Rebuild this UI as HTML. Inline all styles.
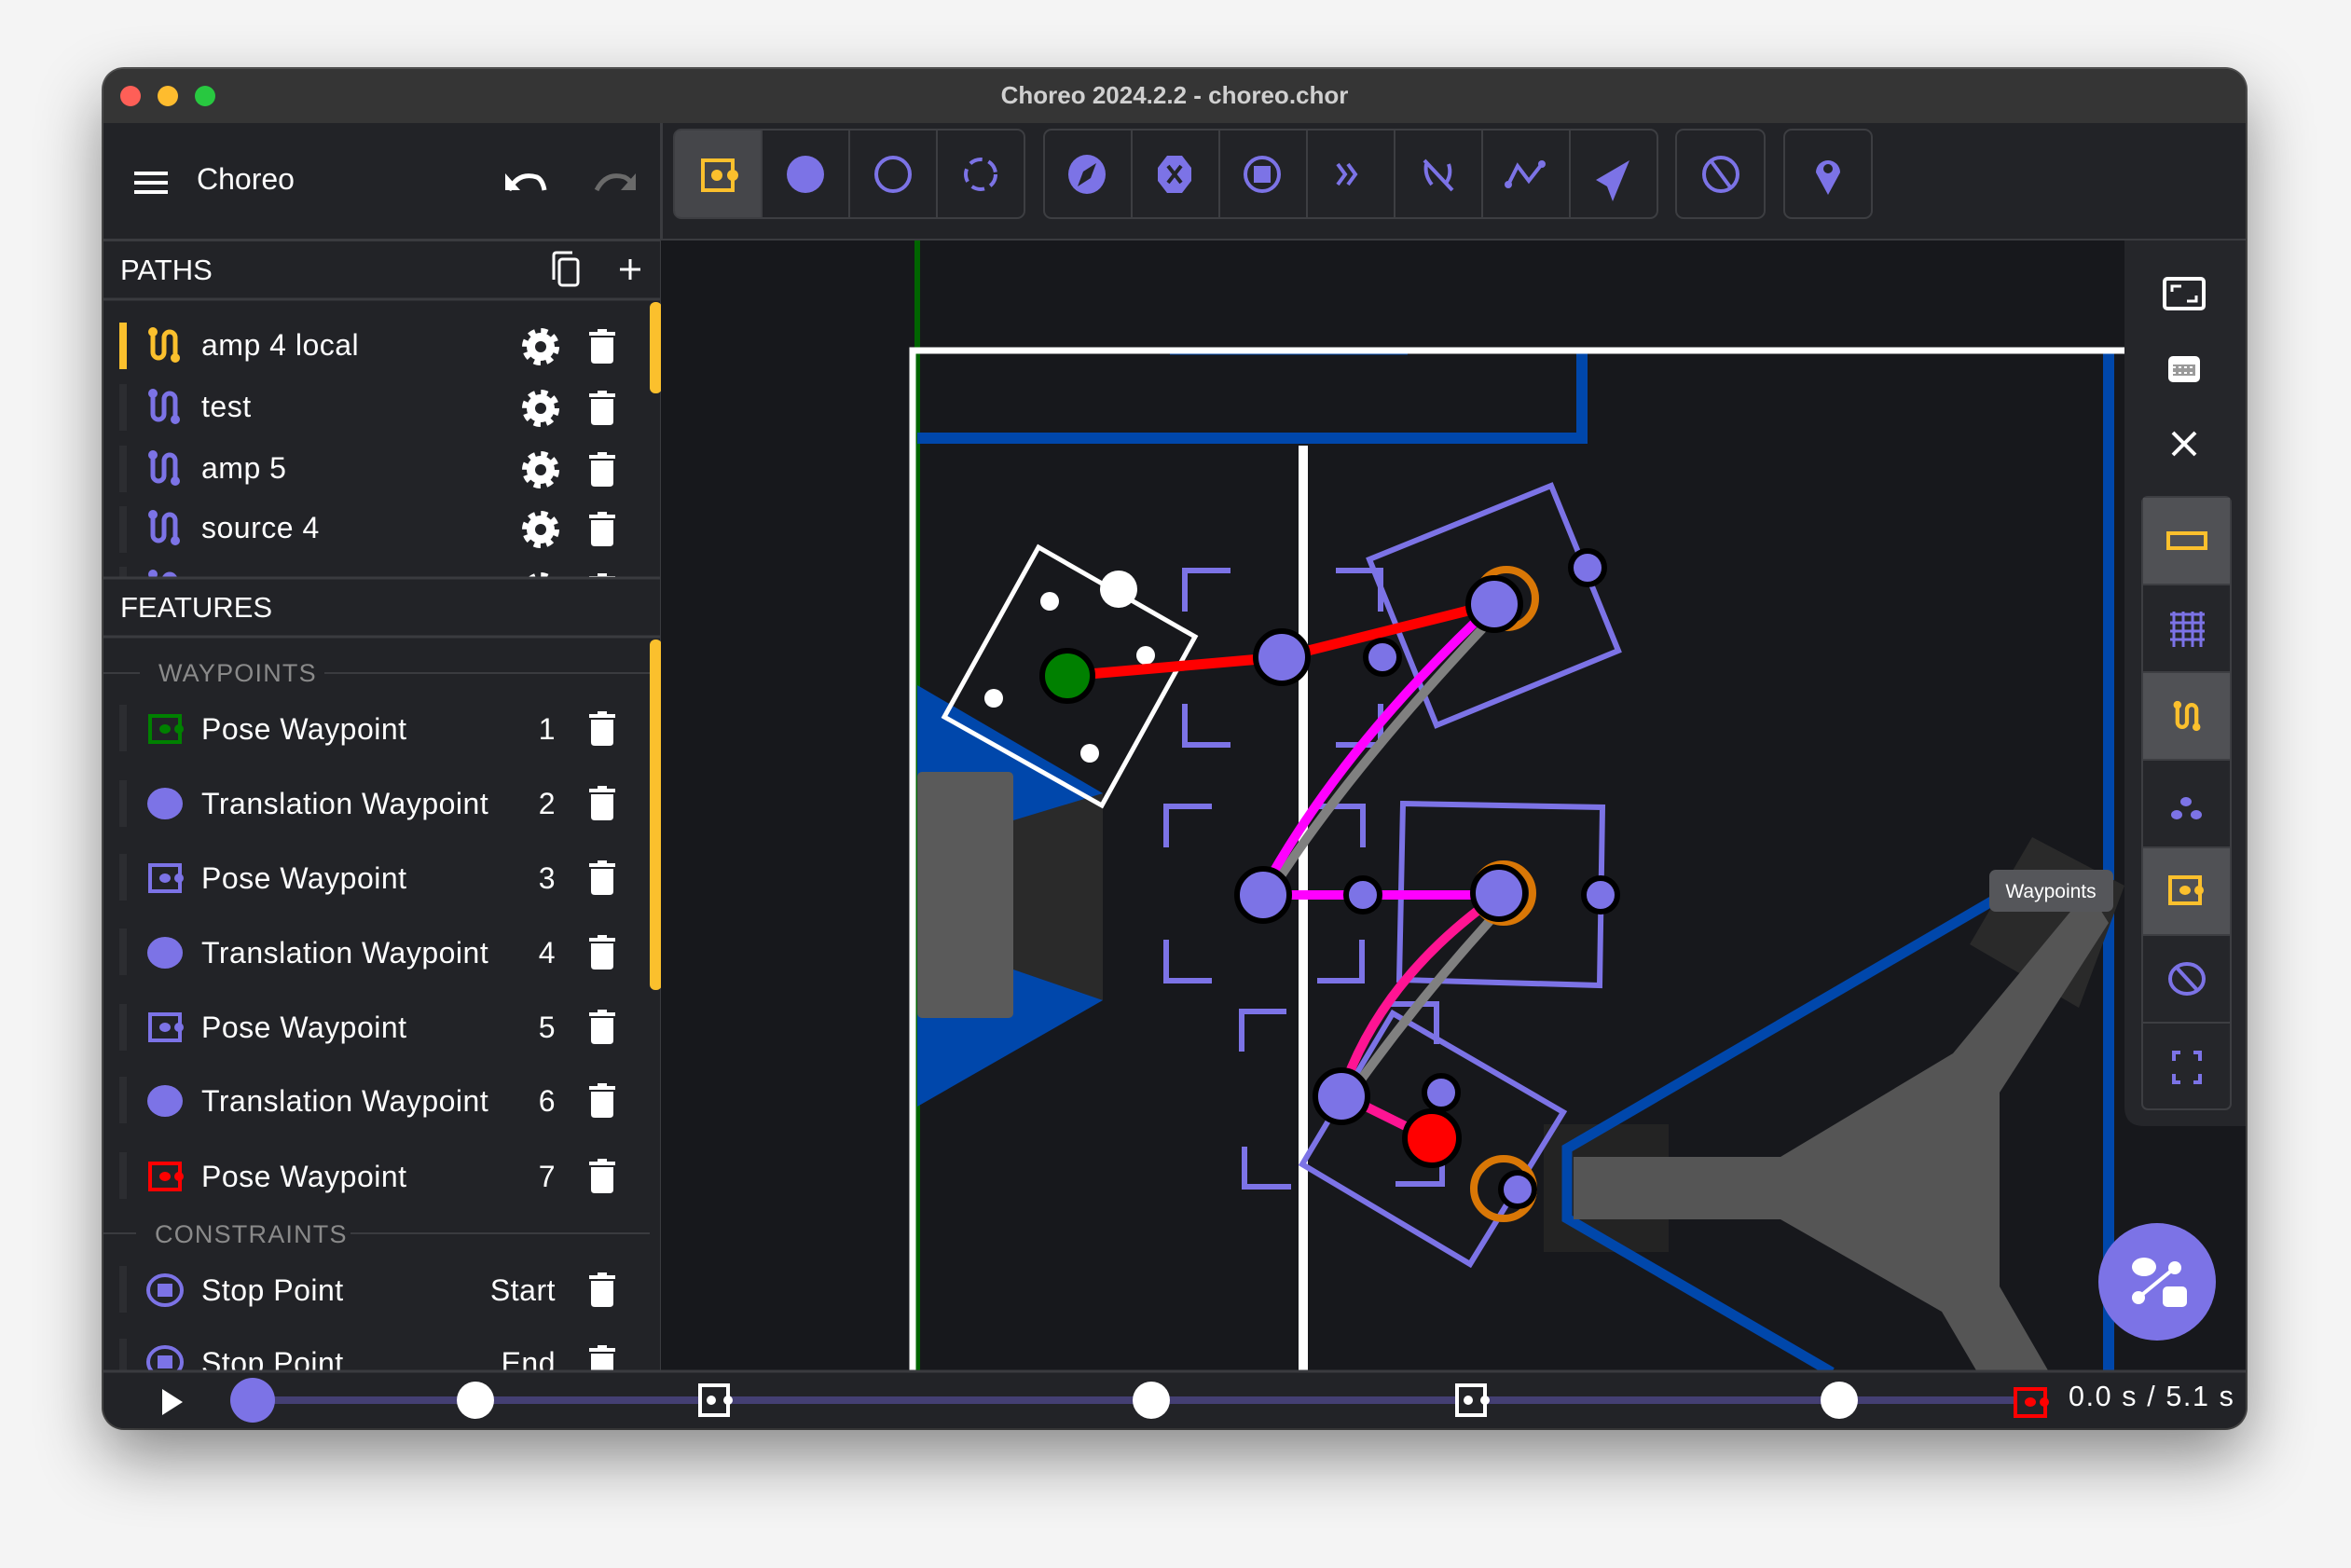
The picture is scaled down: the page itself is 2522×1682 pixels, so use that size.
<!DOCTYPE html>
<html><head><meta charset="utf-8"><style>
html,body{margin:0;padding:0;width:2522px;height:1682px;overflow:hidden;background:#f4f4f4;}
#win{position:absolute;left:111px;top:74px;width:2298px;height:1458px;border-radius:22px;box-shadow:0 30px 70px rgba(0,0,0,0.45),0 0 0 2px #555;overflow:hidden;background:#17181c;}
svg{position:absolute;left:0;top:0;}
text{font-family:"Liberation Sans",sans-serif;}
</style></head><body>
<div id="win"></div>
<svg width="2522" height="1682" viewBox="0 0 2522 1682">
<defs>
<clipPath id="wc"><rect x="111" y="74" width="2298" height="1458" rx="22"/></clipPath>
<clipPath id="cv"><rect x="709" y="258" width="1570" height="1212"/></clipPath>
<clipPath id="sl1"><rect x="111" y="322" width="598" height="298"/></clipPath>
<clipPath id="sl2"><rect x="111" y="684" width="598" height="786"/></clipPath>
<g id="trash"><rect x="-14" y="-16" width="28" height="4" fill="#fff"/><rect x="-5" y="-19" width="10" height="4" fill="#fff"/><path d="M-12 -10 H12 V14 Q12 18 8 18 H-8 Q-12 18 -12 14 Z" fill="#fff"/></g>
<g id="gear"><circle r="15" fill="#fff"/><circle r="15" fill="none" stroke="#fff" stroke-width="10" stroke-dasharray="6.3 5.5"/><circle r="6" fill="#222327"/></g>
<g id="pathic"><path d="M-12 -14 V8 A6 6 0 0 0 0 8 V-8 A6 6 0 0 1 12 -8 V14" fill="none" stroke-width="5"/></g>
</defs>
<g clip-path="url(#wc)">
<rect x="111" y="74" width="2298" height="58" fill="#353535"/>
<circle cx="140" cy="103" r="11" fill="#fe5f57"/><circle cx="180" cy="103" r="11" fill="#febc2e"/><circle cx="220" cy="103" r="11" fill="#28c840"/>
<text x="1260" y="111" font-size="26" font-weight="bold" fill="#d0d0d0" text-anchor="middle">Choreo 2024.2.2 - choreo.chor</text>
<rect x="111" y="132" width="2298" height="126" fill="#222327"/>
<line x1="111" y1="257.5" x2="2409" y2="257.5" stroke="#3a3b3f" stroke-width="3"/>
<line x1="709.5" y1="132" x2="709.5" y2="1470" stroke="#3a3b3f" stroke-width="3"/>
<rect x="144" y="184" width="36" height="4" fill="#fff"/><rect x="144" y="194" width="36" height="4" fill="#fff"/><rect x="144" y="204" width="36" height="4" fill="#fff"/>
<text x="211" y="203" font-size="32" fill="#fff">Choreo</text>
<path d="M546 204 Q556 184 576 190 Q582 193 584 204" fill="none" stroke="#fff" stroke-width="5"/><path d="M542 186 L542 204 L558 204 Z" fill="#fff"/>
<path d="M640 204 Q650 184 670 190 Q676 193 678 198" fill="none" stroke="#6a6a6a" stroke-width="5"/><path d="M682 186 L682 204 L666 204 Z" fill="#6a6a6a"/>
<rect x="723" y="139" width="376" height="95" rx="8" fill="#222327" stroke="#3d3e42" stroke-width="2"/>
<path d="M731 140 H817 V233 H731 Q724 233 724 226 V147 Q724 140 731 140Z" fill="#45464a"/>
<line x1="817" y1="140" x2="817" y2="233" stroke="#3d3e42" stroke-width="2"/><line x1="911" y1="140" x2="911" y2="233" stroke="#3d3e42" stroke-width="2"/><line x1="1005" y1="140" x2="1005" y2="233" stroke="#3d3e42" stroke-width="2"/>
<rect x="754" y="172" width="32" height="32" fill="none" stroke="#fbc02d" stroke-width="4"/><circle cx="769" cy="188" r="6" fill="#fbc02d"/><circle cx="786" cy="188" r="6" fill="#fbc02d"/>
<circle cx="864" cy="187" r="20" fill="#7c73e6"/>
<circle cx="958" cy="187" r="18" fill="none" stroke="#7c73e6" stroke-width="4"/>
<circle cx="1052" cy="187" r="16" fill="none" stroke="#7c73e6" stroke-width="4" stroke-dasharray="14 7"/>
<rect x="1120" y="139" width="658" height="95" rx="8" fill="#222327" stroke="#3d3e42" stroke-width="2"/>
<g stroke="#3d3e42" stroke-width="2"><line x1="1214" y1="140" x2="1214" y2="233"/><line x1="1308" y1="140" x2="1308" y2="233"/><line x1="1402" y1="140" x2="1402" y2="233"/><line x1="1496" y1="140" x2="1496" y2="233"/><line x1="1590" y1="140" x2="1590" y2="233"/><line x1="1684" y1="140" x2="1684" y2="233"/></g>
<g fill="#7c73e6">
<ellipse cx="1166" cy="187" rx="20" ry="21"/><path d="M1176 175 L1170 191 L1156 200 L1162 184Z" fill="#222327"/>
<polygon points="1252,167 1268,167 1278,180 1278,194 1268,207 1252,207 1242,194 1242,180"/><path d="M1253 178 L1267 196 M1267 178 L1253 196" stroke="#222327" stroke-width="4"/>
<circle cx="1354" cy="187" r="18" fill="none" stroke="#7c73e6" stroke-width="4"/><rect x="1345" y="178" width="18" height="18"/>
<path d="M1435 176 L1443 187 L1435 198 M1446 176 L1454 187 L1446 198" fill="none" stroke="#7c73e6" stroke-width="4"/>
<path d="M1530 176 Q1528 188 1536 198 M1554 176 Q1558 188 1550 198 M1528 172 L1558 204" fill="none" stroke="#7c73e6" stroke-width="4"/>
<path d="M1618 198 L1628 178 L1640 194 L1654 176" fill="none" stroke="#7c73e6" stroke-width="4"/><circle cx="1618" cy="198" r="4"/><circle cx="1654" cy="176" r="4"/>
<polygon points="1748,172 1712,193 1724,200 1730,216"/>
</g>
<rect x="1798" y="139" width="95" height="95" rx="8" fill="#222327" stroke="#3d3e42" stroke-width="2"/>
<circle cx="1846" cy="187" r="18" fill="none" stroke="#7c73e6" stroke-width="4"/><line x1="1835" y1="172" x2="1857" y2="202" stroke="#7c73e6" stroke-width="4"/>
<rect x="1914" y="139" width="94" height="95" rx="8" fill="#222327" stroke="#3d3e42" stroke-width="2"/>
<path d="M1961 209 L1948 185 A13 13 0 1 1 1974 185 Z" fill="#7c73e6"/><circle cx="1961" cy="181" r="5" fill="#222327"/>
<rect x="111" y="259" width="597" height="1211" fill="#222327"/>
<text x="129" y="300" font-size="31" fill="#fff">PATHS</text>
<rect x="600" y="278" width="20" height="28" rx="3" fill="none" stroke="#fff" stroke-width="3"/><path d="M594 300 V274 Q594 271 597 271 H614" fill="none" stroke="#fff" stroke-width="3"/>
<path d="M676 278 V300 M665 289 H687" stroke="#fff" stroke-width="3"/>
<line x1="111" y1="321" x2="709" y2="321" stroke="#3a3b3f" stroke-width="3"/>
<g clip-path="url(#sl1)">
<rect x="128" y="346" width="8" height="50" fill="#fbc02d"/>
<rect x="128" y="412" width="8" height="50" fill="#2c2d31"/><rect x="128" y="478" width="8" height="50" fill="#2c2d31"/><rect x="128" y="543" width="8" height="50" fill="#2c2d31"/><rect x="128" y="608" width="8" height="50" fill="#2c2d31"/>
<g transform="translate(176,370)"><use href="#pathic" stroke="#fbc02d"/><circle cx="-12" cy="-14" r="5" fill="#fbc02d"/><circle cx="12" cy="14" r="5" fill="#fbc02d"/></g>
<g transform="translate(176,436)"><use href="#pathic" stroke="#7c73e6"/><circle cx="-12" cy="-14" r="5" fill="#7c73e6"/><circle cx="12" cy="14" r="5" fill="#7c73e6"/></g>
<g transform="translate(176,502)"><use href="#pathic" stroke="#7c73e6"/><circle cx="-12" cy="-14" r="5" fill="#7c73e6"/><circle cx="12" cy="14" r="5" fill="#7c73e6"/></g>
<g transform="translate(176,566)"><use href="#pathic" stroke="#7c73e6"/><circle cx="-12" cy="-14" r="5" fill="#7c73e6"/><circle cx="12" cy="14" r="5" fill="#7c73e6"/></g>
<g transform="translate(176,630)"><use href="#pathic" stroke="#7c73e6"/><circle cx="-12" cy="-14" r="5" fill="#7c73e6"/></g>
<g font-size="32" fill="#fff" letter-spacing="0.5">
<text x="216" y="381">amp 4 local</text>
<text x="216" y="447">test</text>
<text x="216" y="513">amp 5</text>
<text x="216" y="577">source 4</text>
</g>
<use href="#gear" x="580" y="372"/><use href="#gear" x="580" y="438"/><use href="#gear" x="580" y="504"/><use href="#gear" x="580" y="568"/><use href="#gear" x="580" y="634"/>
<use href="#trash" x="646" y="372"/><use href="#trash" x="646" y="438"/><use href="#trash" x="646" y="504"/><use href="#trash" x="646" y="568"/><use href="#trash" x="646" y="634"/>
<rect x="697" y="324" width="13" height="98" rx="6" fill="#fbc02d"/>
</g>
<line x1="111" y1="620" x2="709" y2="620" stroke="#3a3b3f" stroke-width="3"/>
<text x="129" y="662" font-size="31" fill="#fff">FEATURES</text>
<line x1="111" y1="683" x2="709" y2="683" stroke="#3a3b3f" stroke-width="3"/>
<g clip-path="url(#sl2)">
<line x1="111" y1="722" x2="150" y2="722" stroke="#3a3b3f" stroke-width="2"/><line x1="348" y1="722" x2="697" y2="722" stroke="#3a3b3f" stroke-width="2"/>
<text x="170" y="731" font-size="27" fill="#8a8a8a" letter-spacing="1.2">WAYPOINTS</text>
<g fill="#2c2d31"><rect x="128" y="756" width="8" height="50"/><rect x="128" y="837" width="8" height="50"/><rect x="128" y="916" width="8" height="50"/><rect x="128" y="996" width="8" height="50"/><rect x="128" y="1077" width="8" height="50"/><rect x="128" y="1155" width="8" height="50"/><rect x="128" y="1236" width="8" height="50"/><rect x="128" y="1358" width="8" height="50"/><rect x="128" y="1436" width="8" height="50"/></g>
<g transform="translate(177,782)"><rect x="-16" y="-14" width="32" height="28" fill="none" stroke="#008000" stroke-width="4"/><ellipse cx="0" cy="0" rx="6" ry="5" fill="#008000"/><circle cx="15" cy="0" r="5" fill="#008000"/></g>
<ellipse cx="177" cy="862" rx="19" ry="17" fill="#7c73e6"/>
<g transform="translate(177,942)"><rect x="-16" y="-14" width="32" height="28" fill="none" stroke="#7c73e6" stroke-width="4"/><ellipse cx="0" cy="0" rx="6" ry="5" fill="#7c73e6"/><circle cx="15" cy="0" r="5" fill="#7c73e6"/></g>
<ellipse cx="177" cy="1022" rx="19" ry="17" fill="#7c73e6"/>
<g transform="translate(177,1102)"><rect x="-16" y="-14" width="32" height="28" fill="none" stroke="#7c73e6" stroke-width="4"/><ellipse cx="0" cy="0" rx="6" ry="5" fill="#7c73e6"/><circle cx="15" cy="0" r="5" fill="#7c73e6"/></g>
<ellipse cx="177" cy="1181" rx="19" ry="17" fill="#7c73e6"/>
<g transform="translate(177,1262)"><rect x="-16" y="-14" width="32" height="28" fill="none" stroke="#ff0000" stroke-width="4"/><ellipse cx="0" cy="0" rx="6" ry="5" fill="#ff0000"/><circle cx="15" cy="0" r="5" fill="#ff0000"/></g>
<g font-size="32" fill="#fff" letter-spacing="0.5">
<text x="216" y="793">Pose Waypoint</text><text x="216" y="873">Translation Waypoint</text><text x="216" y="953">Pose Waypoint</text><text x="216" y="1033">Translation Waypoint</text><text x="216" y="1113">Pose Waypoint</text><text x="216" y="1192">Translation Waypoint</text><text x="216" y="1273">Pose Waypoint</text>
<text x="596" y="793" text-anchor="end">1</text><text x="596" y="873" text-anchor="end">2</text><text x="596" y="953" text-anchor="end">3</text><text x="596" y="1033" text-anchor="end">4</text><text x="596" y="1113" text-anchor="end">5</text><text x="596" y="1192" text-anchor="end">6</text><text x="596" y="1273" text-anchor="end">7</text>
</g>
<use href="#trash" x="646" y="782"/><use href="#trash" x="646" y="862"/><use href="#trash" x="646" y="942"/><use href="#trash" x="646" y="1022"/><use href="#trash" x="646" y="1102"/><use href="#trash" x="646" y="1181"/><use href="#trash" x="646" y="1262"/>
<line x1="111" y1="1323" x2="146" y2="1323" stroke="#3a3b3f" stroke-width="2"/><line x1="376" y1="1323" x2="697" y2="1323" stroke="#3a3b3f" stroke-width="2"/>
<text x="166" y="1333" font-size="27" fill="#8a8a8a" letter-spacing="1.2">CONSTRAINTS</text>
<g transform="translate(177,1384)"><ellipse rx="18" ry="16" fill="none" stroke="#7c73e6" stroke-width="4"/><rect x="-8" y="-7" width="16" height="14" fill="#7c73e6"/></g>
<g transform="translate(177,1461)"><ellipse rx="18" ry="16" fill="none" stroke="#7c73e6" stroke-width="4"/><rect x="-8" y="-7" width="16" height="14" fill="#7c73e6"/></g>
<g font-size="32" fill="#fff" letter-spacing="0.5">
<text x="216" y="1395">Stop Point</text><text x="596" y="1395" text-anchor="end">Start</text>
<text x="216" y="1473">Stop Point</text><text x="596" y="1473" text-anchor="end">End</text>
</g>
<use href="#trash" x="646" y="1384"/><use href="#trash" x="646" y="1462"/>
<rect x="697" y="686" width="13" height="376" rx="6" fill="#fbc02d"/>
</g>
<g clip-path="url(#cv)">
<rect x="709" y="258" width="1570" height="1212" fill="#17181c"/>
<line x1="984" y1="258" x2="984" y2="1470" stroke="#006400" stroke-width="6"/>
<polygon points="984,735 1183,851 1183,1073 984,1187" fill="#0047ab"/>
<polygon points="1087,880 1183,851 1183,1073 1087,1040" fill="#2a2a2a"/>
<rect x="984" y="828" width="103" height="264" rx="5" fill="#5a5a5a"/>
<path d="M984 470 H1697 V375" fill="none" stroke="#0047ab" stroke-width="12"/>
<line x1="1255" y1="378" x2="1510" y2="378" stroke="#0047ab" stroke-width="5"/>
<line x1="2262" y1="375" x2="2262" y2="1470" stroke="#0047ab" stroke-width="12"/>
<path d="M979 1470 V376 H2279" fill="none" stroke="#fff" stroke-width="7"/>
<line x1="1398" y1="478" x2="1398" y2="1470" stroke="#fff" stroke-width="10"/>
<polygon points="2113,1013 2180,898 2279,950 2230,1081" fill="#2a2a2a"/>
<rect x="1656" y="1206" width="134" height="137" fill="#232323"/>
<path d="M2145 962 L1681 1232 V1307 L1965 1472" fill="none" stroke="#0047ab" stroke-width="11"/>
<polygon points="1688,1241 1910,1241 2095,1130 2240,955 2262,990 2145,1172 2145,1380 2197,1470 2120,1470 2083,1407 1910,1308 1688,1308" fill="#555"/>
<polygon points="1114,587 1282,683 1182,864 1013,769" fill="none" stroke="#fff" stroke-width="5"/>
<circle cx="1200" cy="632" r="20" fill="#fff"/><circle cx="1126" cy="645" r="10" fill="#fff"/><circle cx="1229" cy="703" r="10" fill="#fff"/><circle cx="1066" cy="749" r="10" fill="#fff"/><circle cx="1169" cy="808" r="10" fill="#fff"/>
<g fill="none" stroke="#7c73e6" stroke-width="6">
<path d="M1271 656 V612 H1320"/><path d="M1271 755 V799 H1320"/><path d="M1433 612 H1481 V656"/><path d="M1433 799 H1481 V755"/>
<path d="M1251 909 V865 H1300"/><path d="M1251 1008 V1052 H1300"/><path d="M1413 865 H1462 V909"/><path d="M1413 1052 H1461 V1008"/>
<path d="M1332 1128 V1085 H1380"/><path d="M1335 1230 V1273 H1385"/><path d="M1492 1077 H1541 V1120"/><path d="M1497 1270 H1547 V1250"/>
<polygon points="1469,600 1664,521 1736,698 1541,778"/>
<polygon points="1505,862 1719,866 1716,1057 1501,1051"/>
<polygon points="1494,1087 1677,1193 1577,1356 1397,1249"/>
</g>
<path d="M1145 725 L1375 705 L1603 648" fill="none" stroke="#ff0000" stroke-width="11"/>
<path d="M1618 645 Q1450 820 1362 958" fill="none" stroke="#808080" stroke-width="10"/>
<path d="M1603 648 Q1440 800 1355 955" fill="none" stroke="#ff00ff" stroke-width="10"/>
<path d="M1355 960 H1608" stroke="#ff00ff" stroke-width="10"/>
<path d="M1622 962 Q1530 1060 1450 1172" fill="none" stroke="#808080" stroke-width="10"/>
<path d="M1608 960 Q1480 1050 1439 1174" fill="none" stroke="#ff1493" stroke-width="10"/>
<path d="M1439 1174 L1536 1222" stroke="#ff1493" stroke-width="10"/>
<g stroke="#000" stroke-width="6">
<circle cx="1145" cy="725" r="27" fill="#008000"/>
<circle cx="1375" cy="705" r="28" fill="#7c73e6"/>
<circle cx="1483" cy="705" r="18" fill="#7c73e6"/>
<circle cx="1703" cy="609" r="18" fill="#7c73e6"/>
<circle cx="1616" cy="642" r="31" fill="none" stroke="#d97706" stroke-width="8"/>
<circle cx="1603" cy="648" r="28" fill="#7c73e6"/>
<circle cx="1355" cy="960" r="28" fill="#7c73e6"/>
<circle cx="1462" cy="960" r="18" fill="#7c73e6"/>
<circle cx="1717" cy="960" r="18" fill="#7c73e6"/>
<circle cx="1613" cy="958" r="31" fill="none" stroke="#d97706" stroke-width="8"/>
<circle cx="1608" cy="958" r="28" fill="#7c73e6"/>
<circle cx="1439" cy="1176" r="28" fill="#7c73e6"/>
<circle cx="1546" cy="1172" r="18" fill="#7c73e6"/>
<circle cx="1536" cy="1221" r="29" fill="#ff0000"/>
<circle cx="1613" cy="1275" r="32" fill="none" stroke="#d97706" stroke-width="8"/>
<circle cx="1628" cy="1276" r="18" fill="#7c73e6"/>
</g>
</g>
<rect x="2134" y="933" width="133" height="45" rx="7" fill="#55565a"/>
<text x="2200" y="963" font-size="21" fill="#fff" text-anchor="middle">Waypoints</text>
<path d="M2279 258 H2409 V1208 H2300 Q2279 1208 2279 1187 Z" fill="#25262a"/>
<rect x="2322" y="299" width="42" height="32" rx="3" fill="none" stroke="#fff" stroke-width="4"/><path d="M2330 313 V307 H2340 M2356 317 V323 H2346" fill="none" stroke="#fff" stroke-width="3"/>
<rect x="2326" y="382" width="34" height="28" rx="5" fill="#fff"/><rect x="2331" y="391" width="24" height="12" fill="#9a9a9a"/><path d="M2331 394 H2355 M2331 400 H2355" stroke="#fff" stroke-width="2" stroke-dasharray="3 3"/>
<path d="M2331 464 L2355 488 M2355 464 L2331 488" stroke="#fff" stroke-width="4"/>
<rect x="2298" y="533" width="95" height="657" rx="6" fill="#25262a" stroke="#3d3e42" stroke-width="2"/>
<rect x="2299" y="534" width="93" height="93" fill="#505155"/>
<rect x="2299" y="721" width="93" height="94" fill="#505155"/>
<rect x="2299" y="909" width="93" height="94" fill="#505155"/>
<g stroke="#3d3e42" stroke-width="2"><line x1="2299" y1="627" x2="2392" y2="627"/><line x1="2299" y1="721" x2="2392" y2="721"/><line x1="2299" y1="815" x2="2392" y2="815"/><line x1="2299" y1="909" x2="2392" y2="909"/><line x1="2299" y1="1003" x2="2392" y2="1003"/><line x1="2299" y1="1097" x2="2392" y2="1097"/></g>
<rect x="2326" y="572" width="40" height="16" fill="none" stroke="#fbc02d" stroke-width="4"/>
<path d="M2328 659 H2365 M2328 668 H2365 M2328 677 H2365 M2332 656 V694 M2342 656 V694 M2352 656 V694 M2361 656 V694 M2328 686 H2365" stroke="#7c73e6" stroke-width="3"/>
<g transform="translate(2346,768) scale(0.85)"><use href="#pathic" stroke="#fbc02d"/><circle cx="-12" cy="-14" r="5" fill="#fbc02d"/><circle cx="12" cy="14" r="5" fill="#fbc02d"/></g>
<ellipse cx="2345" cy="860" rx="6" ry="5" fill="#7c73e6"/><ellipse cx="2335" cy="874" rx="6" ry="5" fill="#7c73e6"/><ellipse cx="2356" cy="874" rx="6" ry="5" fill="#7c73e6"/>
<g transform="translate(2344,955)"><rect x="-16" y="-14" width="32" height="28" fill="none" stroke="#fbc02d" stroke-width="4"/><ellipse cx="0" cy="0" rx="6" ry="5" fill="#fbc02d"/><circle cx="15" cy="0" r="5" fill="#fbc02d"/></g>
<ellipse cx="2346" cy="1050" rx="18" ry="16" fill="none" stroke="#7c73e6" stroke-width="4"/><line x1="2335" y1="1038" x2="2357" y2="1062" stroke="#7c73e6" stroke-width="4"/>
<path d="M2332 1138 V1129 H2339 M2353 1129 H2360 V1138 M2332 1152 V1161 H2339 M2353 1161 H2360 V1152" fill="none" stroke="#7c73e6" stroke-width="4"/>
<circle cx="2314" cy="1375" r="63" fill="#7c73e6"/>
<ellipse cx="2300" cy="1359" rx="13" ry="10" fill="#fff"/><circle cx="2333" cy="1360" r="7" fill="#fff"/><circle cx="2294" cy="1392" r="7" fill="#fff"/><rect x="2320" y="1380" width="26" height="22" rx="5" fill="#fff"/><line x1="2294" y1="1392" x2="2333" y2="1360" stroke="#fff" stroke-width="4"/>
<rect x="111" y="1470" width="2298" height="62" fill="#222327"/>
<line x1="111" y1="1471" x2="2409" y2="1471" stroke="#3a3b3f" stroke-width="3"/>
<polygon points="174,1490 196,1504 174,1518" fill="#fff"/>
<line x1="270" y1="1502" x2="2181" y2="1502" stroke="#443f73" stroke-width="8"/>
<ellipse cx="271" cy="1502" rx="24" ry="24" fill="#7c73e6"/>
<circle cx="510" cy="1502" r="20" fill="#fff"/><circle cx="1235" cy="1502" r="20" fill="#fff"/><circle cx="1973" cy="1502" r="20" fill="#fff"/>
<g transform="translate(767,1502)"><rect x="-16" y="-16" width="30" height="32" fill="#222327" stroke="#fff" stroke-width="4"/><circle cx="-4" cy="0" r="5" fill="#fff"/><circle cx="14" cy="0" r="5" fill="#fff"/></g>
<g transform="translate(1579,1502)"><rect x="-16" y="-16" width="30" height="32" fill="#222327" stroke="#fff" stroke-width="4"/><circle cx="-4" cy="0" r="5" fill="#fff"/><circle cx="14" cy="0" r="5" fill="#fff"/></g>
<g transform="translate(2178,1504)"><rect x="-16" y="-14" width="32" height="29" fill="#222327" stroke="#ff0000" stroke-width="4"/><ellipse cx="0" cy="0" rx="6" ry="5" fill="#ff0000"/><circle cx="15" cy="0" r="5" fill="#ff0000"/></g>
<text x="2219" y="1508" font-size="30.5" fill="#fff" letter-spacing="1.6">0.0 s / 5.1 s</text>
</g>
</svg>
</body></html>
